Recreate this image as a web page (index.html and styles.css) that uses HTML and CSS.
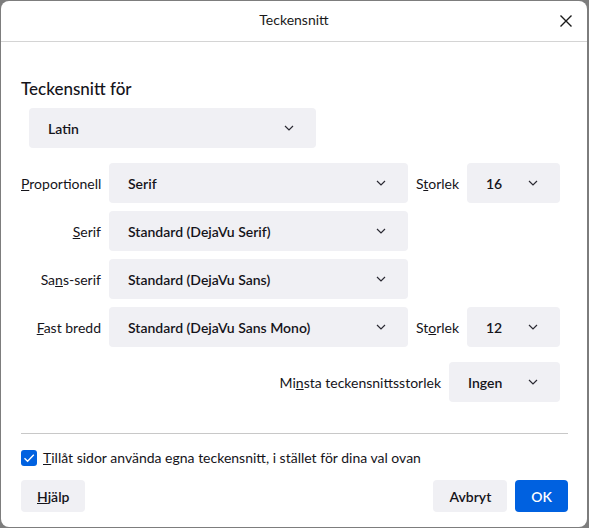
FILE: index.html
```html
<!DOCTYPE html>
<html lang="sv">
<head>
<meta charset="utf-8">
<title>Teckensnitt</title>
<link rel="stylesheet" href="styles.css">
</head>
<body>
<div class="dialog">
  <header class="titlebar">
    <span class="title">Teckensnitt</span>
    <button class="close" aria-label="Stäng">
      <svg width="14" height="14" viewBox="0 0 14 14"><path d="M1.5 1.5 L12.5 12.5 M12.5 1.5 L1.5 12.5" stroke="#1a1a1a" stroke-width="1.4" fill="none"/></svg>
    </button>
  </header>
  <main class="content">
    <h2 class="heading">Teckensnitt för</h2>
    <div class="select lang"><span>Latin</span><svg class="chev" width="10" height="6" viewBox="0 0 10 6"><path d="M1 1 L5 5 L9 1" stroke="#2b2a33" stroke-width="1.2" fill="none"/></svg></div>

    <div class="grid">
      <label class="lbl"><u>P</u>roportionell</label>
      <div class="select"><span>Serif</span><svg class="chev" width="10" height="6" viewBox="0 0 10 6"><path d="M1 1 L5 5 L9 1" stroke="#2b2a33" stroke-width="1.2" fill="none"/></svg></div>
      <label class="lbl">S<u>t</u>orlek</label>
      <div class="select size"><span>16</span><svg class="chev" width="10" height="6" viewBox="0 0 10 6"><path d="M1 1 L5 5 L9 1" stroke="#2b2a33" stroke-width="1.2" fill="none"/></svg></div>

      <label class="lbl"><u>S</u>erif</label>
      <div class="select"><span>Standard (DejaVu Serif)</span><svg class="chev" width="10" height="6" viewBox="0 0 10 6"><path d="M1 1 L5 5 L9 1" stroke="#2b2a33" stroke-width="1.2" fill="none"/></svg></div>
      <span></span><span></span>

      <label class="lbl">Sa<u>n</u>s-serif</label>
      <div class="select"><span>Standard (DejaVu Sans)</span><svg class="chev" width="10" height="6" viewBox="0 0 10 6"><path d="M1 1 L5 5 L9 1" stroke="#2b2a33" stroke-width="1.2" fill="none"/></svg></div>
      <span></span><span></span>

      <label class="lbl"><u>F</u>ast bredd</label>
      <div class="select"><span>Standard (DejaVu Sans Mono)</span><svg class="chev" width="10" height="6" viewBox="0 0 10 6"><path d="M1 1 L5 5 L9 1" stroke="#2b2a33" stroke-width="1.2" fill="none"/></svg></div>
      <label class="lbl">St<u>o</u>rlek</label>
      <div class="select size"><span>12</span><svg class="chev" width="10" height="6" viewBox="0 0 10 6"><path d="M1 1 L5 5 L9 1" stroke="#2b2a33" stroke-width="1.2" fill="none"/></svg></div>
    </div>

    <div class="minrow">
      <label class="lbl">Mi<u>n</u>sta teckensnittsstorlek</label>
      <div class="select min"><span>Ingen</span><svg class="chev" width="10" height="6" viewBox="0 0 10 6"><path d="M1 1 L5 5 L9 1" stroke="#2b2a33" stroke-width="1.2" fill="none"/></svg></div>
    </div>

    <hr class="sep">

    <label class="check">
      <span class="box"><svg width="14" height="14" viewBox="0 0 14 14"><path d="M2.5 7.2 L5.6 10.2 L11.8 3.8" stroke="#fff" stroke-width="1.4" fill="none"/></svg></span>
      <span><u>T</u>illåt sidor använda egna teckensnitt, i stället för dina val ovan</span>
    </label>

    <div class="buttons">
      <button class="btn"><u>H</u>jälp</button>
      <span class="spacer"></span>
      <button class="btn">Avbryt</button>
      <button class="btn primary">OK</button>
    </div>
  </main>
</div>
</body>
</html>
```
FILE: styles.css
```css
* { box-sizing: border-box; }
html, body { margin: 0; padding: 0; }
body {
  background: #7d7d7d;
  width: 589px;
  height: 528px;
  padding: 1px 2px 1px 1px;
  font-family: Lato, "Noto Sans", sans-serif;
  color: #15141a;
  font-size: 15px;
}
.dialog {
  background: #fff;
  width: 586px;
  height: 526px;
  border-radius: 8px;
  display: flex;
  flex-direction: column;
}
.titlebar {
  height: 41px;
  border-bottom: 1px solid #d4d4d4;
  display: flex;
  align-items: center;
  justify-content: center;
  padding-bottom: 4px;
  position: relative;
}
.title {
  font-size: 14px;
  color: #1a1a1a;
}
.close {
  position: absolute;
  right: 14px;
  top: 13px;
  border: 0;
  background: none;
  padding: 0;
  width: 14px;
  height: 14px;
  display: flex;
}
.content {
  padding: 36px 18px 0 20px;
  display: flex;
  flex-direction: column;
}
.heading {
  margin: 0 0 8px 0;
  font-size: 17px;
  font-weight: 500;
  line-height: 22px;
}
.select {
  background: #f0f0f4;
  border-radius: 4px;
  height: 40px;
  display: flex;
  align-items: center;
  justify-content: space-between;
  padding: 0 22px 0 19px;
  font-size: 14px;
}
.select span { font-weight: 600; }
.lang {
  margin-left: 8px;
  width: 287px;
}
.grid {
  margin-top: 15px;
  display: grid;
  grid-template-columns: 80px 299px 43px 93px;
  column-gap: 8px;
  row-gap: 8px;
  align-items: center;
}
.lbl {
  text-align: right;
  white-space: nowrap;
  font-size: 14px;
}
.minrow {
  margin-top: 15px;
  display: flex;
  justify-content: flex-end;
  align-items: center;
  gap: 8px;
  padding-right: 9px;
}
.min { width: 111px; }
.sep {
  margin: 31px 0 0 0;
  border: 0;
  border-top: 1px solid #c8c8c8;
  width: 547px;
}
.check {
  margin-top: 15px;
  display: flex;
  align-items: center;
  gap: 6px;
  font-size: 14px;
}
.box {
  width: 16px;
  height: 16px;
  border-radius: 3px;
  background: #0061e0;
  display: flex;
  align-items: center;
  justify-content: center;
}
.buttons {
  margin-top: 14px;
  display: flex;
  align-items: center;
  gap: 8px;
  width: 547px;
}
.spacer { flex: 1; }
.btn {
  height: 32px;
  border: 0;
  border-radius: 4px;
  background: #f0f0f4;
  font-family: inherit;
  font-size: 14px;
  font-weight: 600;
  color: #15141a;
  padding: 0 16px;
}
.btn.primary {
  background: #0061e0;
  color: #fff;
}
```
